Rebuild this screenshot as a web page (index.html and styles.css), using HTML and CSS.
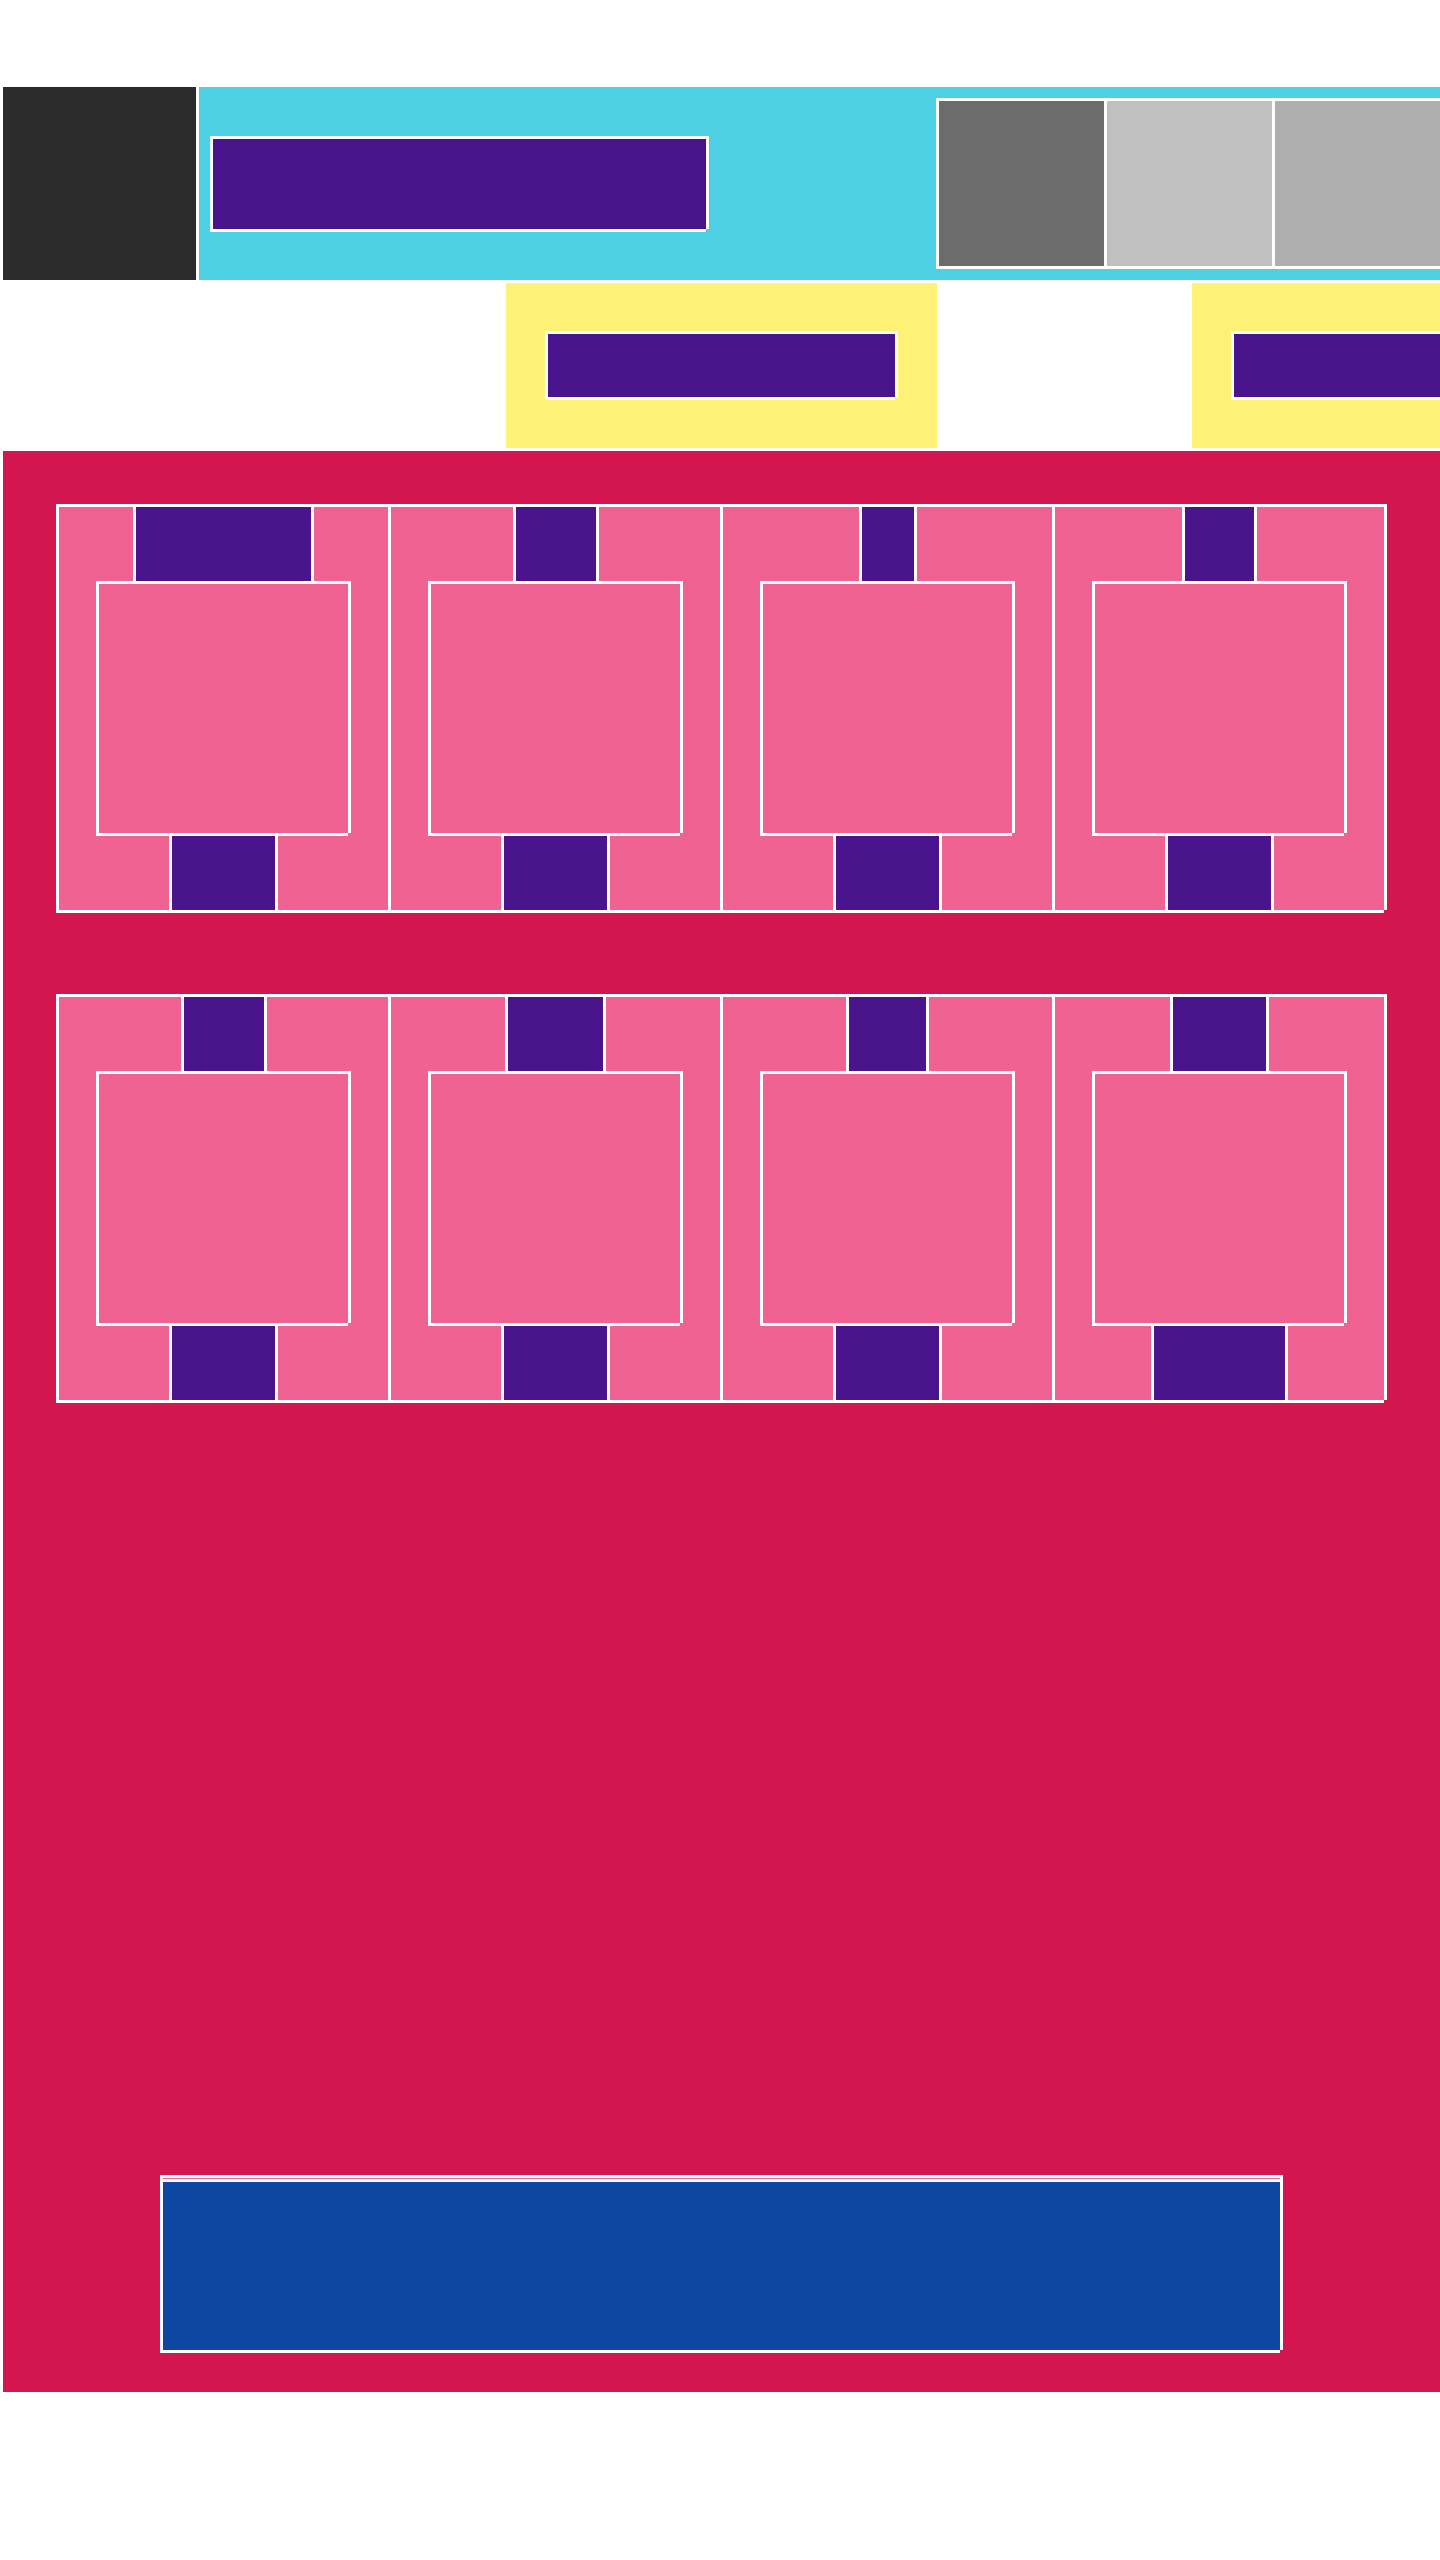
FILE: index.html
```html
<!DOCTYPE html>
<html lang="en">
<head>
<meta charset="utf-8">
<title>Layout</title>
<link rel="stylesheet" href="styles.css">
</head>
<body>
<div class="page">
  <header class="top">
    <div class="logo fr"></div>
    <div class="bar fr">
      <div class="title fr"></div>
      <div class="thumbs">
        <div class="thumb g1 fr"></div>
        <div class="thumb g2 fr"></div>
        <div class="thumb g3 fr"></div>
      </div>
    </div>
  </header>

  <nav class="tabs">
    <div class="tab fr"><div class="tab-label fr"></div></div>
    <div class="tab fr"><div class="tab-label fr"></div></div>
  </nav>

  <main class="stage fr">
    <section class="grid">
      <div class="card fr"><div class="tt w175 fr"></div><div class="sq fr"></div><div class="bt w103 fr"></div></div>
      <div class="card fr"><div class="tt w80 fr"></div><div class="sq fr"></div><div class="bt w103 fr"></div></div>
      <div class="card fr"><div class="tt w52 fr"></div><div class="sq fr"></div><div class="bt w103 fr"></div></div>
      <div class="card fr"><div class="tt w69 fr"></div><div class="sq fr"></div><div class="bt w103 fr"></div></div>
    </section>
    <section class="grid grid-2">
      <div class="card fr"><div class="tt w80 fr"></div><div class="sq fr"></div><div class="bt w103 fr"></div></div>
      <div class="card fr"><div class="tt w95 fr"></div><div class="sq fr"></div><div class="bt w103 fr"></div></div>
      <div class="card fr"><div class="tt w77 fr"></div><div class="sq fr"></div><div class="bt w103 fr"></div></div>
      <div class="card fr"><div class="tt w93 fr"></div><div class="sq fr"></div><div class="bt w131 fr"></div></div>
    </section>
    <div class="footer-wrap fr"><div class="footer fr"></div></div>
  </main>
</div>
</body>
</html>
```

FILE: styles.css
```css
html, body {
  margin: 0;
  padding: 0;
  background: #ffffff;
}

.page {
  width: 1440px;
  min-height: 2560px;
  box-sizing: border-box;
  padding: 87px 0 0 3px;
  overflow: hidden;
}

/* white frame drawn round each block, missing its bottom-right corner */
.fr {
  box-shadow:
    -3px -3px 0 #ffffff,
    3px -3px 0 #ffffff,
    3px 0 0 #ffffff,
    -3px 3px 0 #ffffff,
    0 3px 0 #ffffff;
}

/* header */
.top {
  display: flex;
  height: 193px;
}

.logo {
  flex: none;
  width: 193px;
  height: 193px;
  background: #2c2c2c;
}

.bar {
  flex: none;
  width: 1255px;
  margin-left: 3px;
  box-sizing: border-box;
  padding: 0 14px;
  display: flex;
  align-items: center;
  background: #4dd0e1;
}

.title {
  width: 493px;
  height: 90px;
  background: #4a148c;
}

.thumbs {
  margin-left: auto;
  display: flex;
  gap: 3px;
}

.thumb {
  width: 165px;
  height: 165px;
}

.g1 { background: #6c6c6c; }
.g2 { background: #c0c0c0; }
.g3 { background: #afafaf; }

/* tab row */
.tabs {
  display: flex;
  gap: 255px;
  height: 165px;
  margin-top: 3px;
  padding-left: 503px;
}

.tab {
  flex: none;
  width: 431px;
  height: 165px;
  display: flex;
  align-items: center;
  justify-content: center;
  background: #fff176;
}

.tab-label {
  width: 347px;
  height: 63px;
  background: #4a148c;
}

/* main stage */
.stage {
  width: 1437px;
  height: 1941px;
  margin-top: 3px;
  box-sizing: border-box;
  padding: 56px 56px 42px;
  display: flex;
  flex-direction: column;
  background: #d31550;
}

.grid {
  display: grid;
  grid-template-columns: repeat(4, 329px);
  gap: 3px;
}

.grid-2 {
  margin-top: 87px;
}

.card {
  height: 403px;
  display: flex;
  flex-direction: column;
  align-items: center;
  background: #f06292;
}

.tt,
.bt {
  height: 74px;
  background: #4a148c;
}

.sq {
  width: 249px;
  height: 249px;
  margin-top: 3px;
  background: #f06292;
}

.bt {
  margin-top: 3px;
}

.w52 { width: 52px; }
.w69 { width: 69px; }
.w77 { width: 77px; }
.w80 { width: 80px; }
.w93 { width: 93px; }
.w95 { width: 95px; }
.w103 { width: 103px; }
.w131 { width: 131px; }
.w175 { width: 175px; }

.footer-wrap {
  margin-top: auto;
  align-self: center;
  width: 1117px;
  padding-top: 4px;
  background: #f06292;
}

.footer {
  height: 168px;
  background: #0d47a1;
}
```
